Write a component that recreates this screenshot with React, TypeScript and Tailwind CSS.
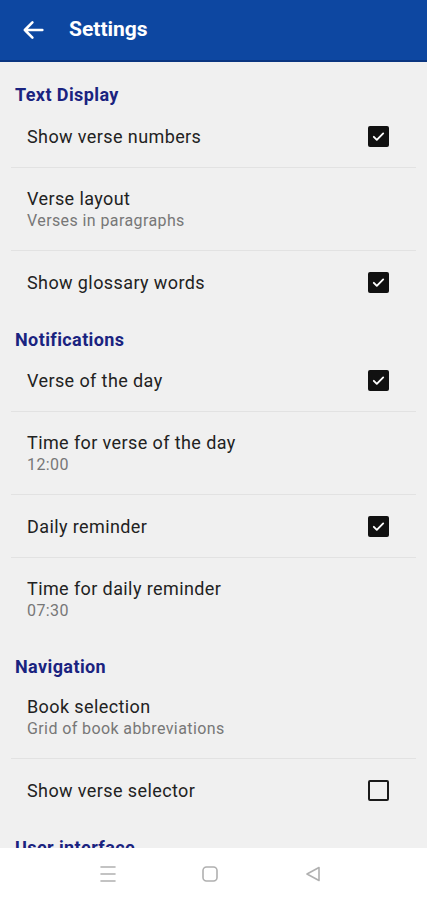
import React from "react";

type Item =
  | { kind: "header"; label: string; first?: boolean }
  | { kind: "check"; title: string; checked: boolean; divider?: boolean }
  | { kind: "value"; title: string; value: string; divider?: boolean };

const items: Item[] = [
  { kind: "header", label: "Text Display", first: true },
  { kind: "check", title: "Show verse numbers", checked: true, divider: true },
  { kind: "value", title: "Verse layout", value: "Verses in paragraphs", divider: true },
  { kind: "check", title: "Show glossary words", checked: true },
  { kind: "header", label: "Notifications" },
  { kind: "check", title: "Verse of the day", checked: true, divider: true },
  { kind: "value", title: "Time for verse of the day", value: "12:00", divider: true },
  { kind: "check", title: "Daily reminder", checked: true, divider: true },
  { kind: "value", title: "Time for daily reminder", value: "07:30" },
  { kind: "header", label: "Navigation" },
  { kind: "value", title: "Book selection", value: "Grid of book abbreviations", divider: true },
  { kind: "check", title: "Show verse selector", checked: false },
  { kind: "header", label: "User interface" },
];

function Checkbox({ checked }: { checked: boolean }) {
  if (!checked) {
    return <div className="w-[21px] h-[21px] rounded-[2px] border-2 border-[#1a1a1a]" />;
  }
  return (
    <div className="w-[21px] h-[21px] rounded-[2px] bg-[#111] flex items-center justify-center">
      <svg width="15" height="15" viewBox="0 0 24 24" fill="none">
        <path d="M4.5 12.5l4.8 4.8L19.5 7" stroke="#fff" strokeWidth="3" strokeLinecap="round" strokeLinejoin="round" />
      </svg>
    </div>
  );
}

function Divider() {
  return <div className="mx-[11px] h-px bg-[#e2e2e2]" />;
}

export default function App() {
  return (
    <div className="w-[427px] h-[900px] flex flex-col bg-[#f0f0f0] overflow-hidden" style={{ fontFamily: "Roboto, 'Noto Sans', sans-serif" }}>
      {/* App bar */}
      <div className="h-[62px] shrink-0 bg-[#0d47a1] border-b-2 border-[#0a3580] flex items-center">
        <svg className="ml-[19px]" width="28" height="28" viewBox="0 0 24 24" fill="none">
          <path d="M20 12H5M11.5 5.5L5 12l6.5 6.5" stroke="#fff" strokeWidth="2.2" strokeLinecap="round" strokeLinejoin="round" />
        </svg>
        <span className="ml-[22px] text-white text-[21px] font-bold">Settings</span>
      </div>

      {/* Preference list */}
      <div className="flex-1 overflow-hidden">
        {items.map((it, i) => {
          if (it.kind === "header") {
            return (
              <div key={i} className={`${it.first ? "pt-[24px] pb-[1px]" : "pt-[18px]"} px-[15px]`}>
                <div className="text-[18px] leading-[18px] font-bold text-[#1a2380] tracking-[0.4px]">{it.label}</div>
              </div>
            );
          }
          if (it.kind === "check") {
            return (
              <div key={i}>
                <div className="h-[62px] flex items-center justify-between pl-[27px] pr-[38px]">
                  <span className="text-[18px] text-[#222] tracking-[0.4px]">{it.title}</span>
                  <Checkbox checked={it.checked} />
                </div>
                {it.divider && <Divider />}
              </div>
            );
          }
          return (
            <div key={i}>
              <div className="h-[82px] flex flex-col justify-center pl-[27px] pr-[38px]">
                <span className="text-[18px] leading-[23px] text-[#222] tracking-[0.4px]">{it.title}</span>
                <span className="text-[16px] leading-[22px] text-[#777] tracking-[0.4px]">{it.value}</span>
              </div>
              {it.divider && <Divider />}
            </div>
          );
        })}
      </div>

      {/* System nav bar */}
      <div className="h-[52px] shrink-0 bg-white flex items-center">
        <div className="ml-[100px]">
          <svg width="16" height="18" viewBox="0 0 16 18" fill="none">
            <path d="M1 2h14M1 9h14M1 16h14" stroke="#b0b0b0" strokeWidth="1.6" strokeLinecap="round" />
          </svg>
        </div>
        <div className="ml-[86px]">
          <svg width="16" height="16" viewBox="0 0 16 16" fill="none">
            <rect x="1" y="1" width="14" height="14" rx="3.5" stroke="#b0b0b0" strokeWidth="1.6" />
          </svg>
        </div>
        <div className="ml-[87px]">
          <svg width="16" height="16" viewBox="0 0 16 16" fill="none">
            <path d="M14 1.5L2 8l12 6.5z" stroke="#b0b0b0" strokeWidth="1.6" strokeLinejoin="round" />
          </svg>
        </div>
      </div>
    </div>
  );
}
